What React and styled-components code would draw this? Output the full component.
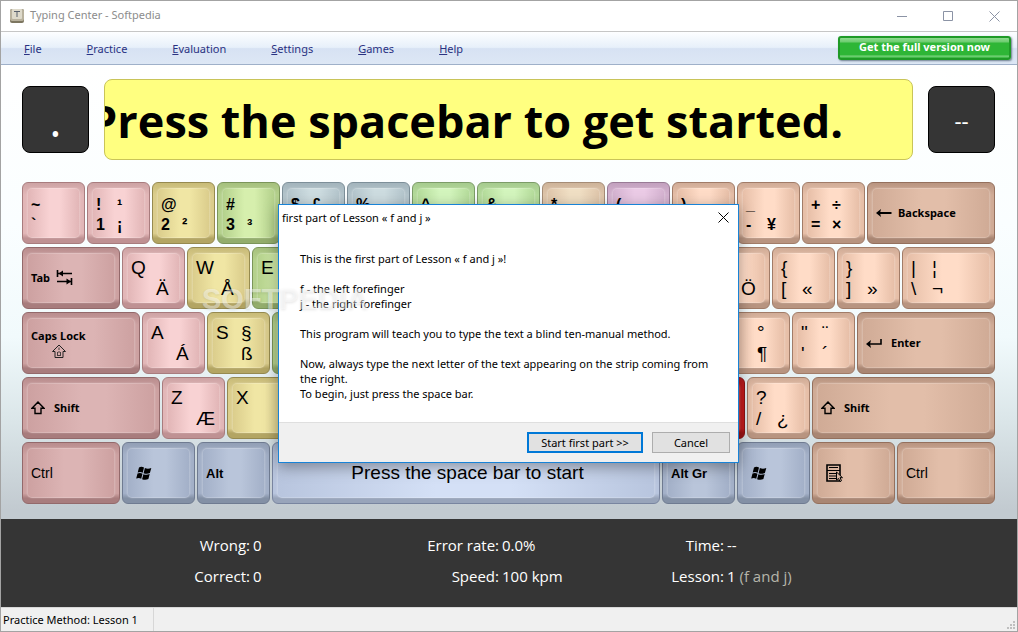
import styled, { createGlobalStyle } from "styled-components";

const GlobalStyle = createGlobalStyle`
*{
    box-sizing:border-box;
}
body{
    margin:0;
    font-family:"Noto Sans", "Open Sans", sans-serif;
    font-size:11px;
    color:#000;
}
button{
    font:inherit;
    color:inherit;
    padding:0;
}
`;

const tones = {
    pink: { face: "#f8d2d3", edge: "#e2b6b7", top: "#cda3a4", low: "#bf9193", line: "#a87c7e" },
    pinkMod: { face: "#dcb4b4", edge: "#cda1a1", top: "#b98d8e", low: "#a87c7d", line: "#93696b" },
    yellow: { face: "#f0e6a4", edge: "#dbcd8c", top: "#c8bb78", low: "#b3a563", line: "#968a50" },
    green: { face: "#d6efad", edge: "#b4d18c", top: "#a6c07e", low: "#93ad6c", line: "#7b955a" },
    mint: { face: "#d3f5bd", edge: "#b5dc9b", top: "#a6cb8f", low: "#90b67b", line: "#7c9c68" },
    steel: { face: "#cddce0", edge: "#b4c5cc", top: "#a3b4bc", low: "#92a4ac", line: "#7d8f99" },
    sand: { face: "#f0dfc4", edge: "#dfc6ab", top: "#cdb399", low: "#b59b82", line: "#a58c76" },
    violet: { face: "#ebcbe6", edge: "#d4b2d0", top: "#c2a1be", low: "#ab8aa7", line: "#997b96" },
    peach: { face: "#ffdcc7", edge: "#e7bfa8", top: "#d0ac97", low: "#b89480", line: "#a17c68" },
    peachMod: { face: "#e2bea9", edge: "#d0ab96", top: "#b99581", low: "#a98673", line: "#94705d" },
    blue: { face: "#b9c5da", edge: "#a3b0c8", top: "#929fb5", low: "#8390a5", line: "#6f7b91" },
    space: { face: "#d4e0f6", edge: "#b8c5de", top: "#a5b2cb", low: "#98a4ba", line: "#7985a0" },
    red: { face: "#e62020", edge: "#c41a1c", top: "#b51d1f", low: "#9c1416", line: "#8a1214" },
};

const Window = styled.div`
position:relative;
display:flex;
flex-direction:column;
min-height:100vh;
border:1px solid #a3a3a3;
background:#fff;
`;

const TitleBar = styled.header`
display:flex;
align-items:center;
height:31px;
padding-left:8px;
border-bottom:1px solid #c6c6c6;
color:#8c8c8c;
h1{
    flex:1;
    margin:0 0 0 5px;
    font-size:11px;
    font-weight:normal;
    line-height:28px;
    padding-bottom:2px;
}
`;

const CaptionBtn = styled.button`
display:grid;
place-items:center;
width:46px;
height:30px;
border:0;
background:none;
`;

const MenuBar = styled.nav`
display:flex;
align-items:center;
gap:1px;
height:33px;
padding:0 6px 0 1px;
border-bottom:1px solid #9fb0c9;
background:linear-gradient(#fdfeff 0, #e7f0fa 48%, #d7e2f3 52%, #dde7f5 100%);
`;

const MenuLink = styled.a`
padding:0 22px;
color:#2a3282;
text-decoration:none;
`;

const FullVersionBtn = styled.button`
width:173px;
height:24px;
margin-left:auto;
padding-bottom:2px;
border:2px solid #1f9a27;
border-radius:3px;
background:linear-gradient(#8fdb8f 0, #6dcc70 4px, #2eb636 5px, #2eb636 17px, #7fd482 18px, #2eb636 20px);
box-shadow:1px 1px 2px #6c7c8c;
color:#fff;
font-weight:bold;
line-height:16px;
`;

const Trainer = styled.main`
flex:1;
padding:14px 22px 15px 21px;
background:linear-gradient(#fff 0, #fafeff 35%, #f1fafc 60%, #dbe6e9 78%, #c2cad0 98%);
`;

const StripRow = styled.div`
display:flex;
align-items:center;
gap:15px;
`;

const LetterBox = styled.output`
flex:none;
display:flex;
align-items:center;
justify-content:center;
width:67px;
height:67px;
border:1px solid #000;
border-radius:8px;
background:#353535;
color:#fff;
font-size:${(p) => (p.$big ? "44px" : "22px")};
line-height:40px;
`;

const Strip = styled.div`
flex:1;
display:flex;
justify-content:flex-end;
min-width:0;
height:81px;
padding-right:69px;
border:1px solid #c9c459;
border-radius:8px;
overflow:hidden;
background:#ffff80;
font-family:"Open Sans", "Noto Sans", sans-serif;
font-size:45px;
font-weight:bold;
line-height:82px;
white-space:nowrap;
`;

const Keyboard = styled.div`
display:grid;
gap:3px;
margin-top:22px;
`;

const KeyRow = styled.div`
display:flex;
gap:2px;
`;

const KeyCap = styled.button`
flex:${(p) => `${p.$width} ${p.$width} ${p.$width}px`};
display:flex;
min-width:0;
height:62px;
padding:5px 4px;
border:1px solid ${(p) => p.$tone.line};
border-radius:6px;
background:linear-gradient(${(p) => `${p.$tone.top} 0, ${p.$tone.edge} 20%, ${p.$tone.edge} 84%, ${p.$tone.low} 92%`});
text-align:left;
`;

const Face = styled.span`
flex:1;
display:flex;
flex-direction:${(p) => (p.$stack ? "column" : "row")};
align-items:${(p) => (p.$stack ? "flex-start" : "center")};
justify-content:${(p) => (p.$center ? "center" : "flex-start")};
gap:${(p) => (p.$stack ? "0" : `${p.$gap || 6}px`)};
min-width:0;
padding-left:3px;
border:1px solid rgba(255,255,255,.18);
border-radius:5px;
background:linear-gradient(to right, ${(p) => `${p.$tone.edge}, ${p.$tone.face} 42%, ${p.$tone.face} 62%, ${p.$tone.edge}`});
box-shadow:0 0 2px rgba(255,255,255,.3);
svg{
    flex:none;
}
`;

const Legends = styled.span`
display:grid;
grid-template-columns:${(p) => (p.$letters ? "25px" : "21px")} auto;
grid-auto-rows:${(p) => (p.$bold ? "20px" : "21px")};
padding-top:${(p) => (p.$bold ? "4px" : "2px")};
font-family:"Liberation Sans", Arial, sans-serif;
font-size:${(p) => (p.$bold ? "16px" : "19px")};
font-weight:${(p) => (p.$bold ? "bold" : "normal")};
line-height:20px;
`;

const KeyLabel = styled.span`
font-weight:bold;
line-height:16px;
white-space:nowrap;
`;

const PlainLabel = styled.span`
font-family:"Liberation Sans", Arial, sans-serif;
font-size:${(p) => p.$size}px;
font-weight:${(p) => (p.$bold ? "bold" : "normal")};
white-space:nowrap;
`;

const IconSlot = styled.span`
display:flex;
padding-left:${(p) => p.$indent || 0}px;
`;

const Stats = styled.dl`
display:grid;
grid-template-columns:249fr 150fr 99fr 120fr 105fr 293fr;
grid-auto-rows:31px;
margin:0;
padding:11px 0 15px;
background:#353535;
color:#fff;
font-family:"Open Sans", "Noto Sans", sans-serif;
font-size:15px;
line-height:31px;
white-space:nowrap;
dt{
    text-align:right;
}
dd{
    margin:0;
    padding-left:3px;
}
small{
    color:#b5b5ab;
    font-size:15px;
}
`;

const StatusBar = styled.footer`
display:flex;
align-items:stretch;
justify-content:space-between;
height:24px;
border-top:1px solid #d7d7d7;
background:#f0f0f0;
line-height:23px;
span{
    width:153px;
    padding-left:2px;
    border-right:1px solid #d7d7d7;
    white-space:nowrap;
}
svg{
    align-self:flex-end;
    margin:0 2px 2px 0;
}
`;

const Dialog = styled.section`
position:absolute;
top:203px;
left:calc(50% - 231px);
width:461px;
display:flex;
flex-direction:column;
border:1px solid #1883d7;
background:#fff;
box-shadow:0 4px 14px rgba(0,0,0,.35);
`;

const DialogTitle = styled.div`
display:flex;
align-items:center;
justify-content:space-between;
height:24px;
padding-left:3px;
h2{
    margin:0;
    font-size:11px;
    font-weight:normal;
}
`;

const CloseBtn = styled.button`
display:grid;
place-items:center;
width:30px;
height:24px;
border:0;
background:none;
`;

const DialogBody = styled.div`
padding:22px 10px 21px 21px;
line-height:15px;
white-space:nowrap;
p{
    margin:0 0 15px;
}
p:last-child{
    margin:0;
}
`;

const DialogFooter = styled.div`
display:flex;
justify-content:flex-end;
gap:9px;
padding:9px 8px;
border-top:1px solid #dfdfdf;
background:#f0f0f0;
`;

const DialogBtn = styled.button`
width:${(p) => (p.$primary ? "116px" : "78px")};
height:21px;
border:${(p) => (p.$primary ? "2px solid #0078d7" : "1px solid #adadad")};
background:#e1e1e1;
line-height:15px;
`;

const Watermark = styled.span`
position:absolute;
top:278px;
left:201px;
color:rgba(255,255,255,.45);
font-family:"Liberation Sans", Arial, sans-serif;
font-size:29px;
font-weight:bold;
line-height:40px;
text-shadow:0 1px 3px rgba(0,0,0,.1);
pointer-events:none;
`;

const AppIcon = () => (
    <svg width="16" height="16" viewBox="0 0 16 16">
        <rect x="1" y="1" width="14" height="14" rx="2" fill="#7d7660" />
        <rect x="1" y="1" width="14" height="12" rx="2" fill="#b9b29e" />
        <rect x="3" y="1" width="10" height="10" rx="1" fill="#dedacb" />
        <path d="M5 3.500h6M8 3v6" stroke="#59616c" fill="none" />
    </svg>
);

const TabIcon = () => (
    <svg width="18" height="18" viewBox="0 0 18 18" fill="none" stroke="#000" strokeWidth="1.600">
        <path d="M1.500 1v7M2 4.500h14M15.500 9v7M1 12.500h14" />
        <path d="M7 1.500v6L2.500 4.500zM10.500 9.500v6l4.500-3z" fill="#000" stroke="none" />
    </svg>
);

const CapsIcon = () => (
    <svg width="16" height="15" viewBox="0 0 16 15" fill="none" stroke="#222">
        <path d="M8 1L1.500 7.500H4V13.500H12V7.500H14.500z" />
        <path d="M8 3.500V6M6.500 8v3M9.500 8v3M8 7v2M6 11.500h4" strokeWidth="0.800" />
    </svg>
);

const ShiftIcon = () => (
    <svg width="14" height="14" viewBox="0 0 14 14" fill="none" stroke="#000" strokeWidth="1.400">
        <path d="M7 1L1 7.300H4V12.500H10V7.300H13z" />
    </svg>
);

const BackIcon = () => (
    <svg width="16" height="10" viewBox="0 0 16 10">
        <path d="M3 5h12.500" stroke="#000" strokeWidth="2" />
        <path d="M0 5l5-4-1 4 1 4z" />
    </svg>
);

const EnterIcon = () => (
    <svg width="16" height="10" viewBox="0 0 16 10">
        <path d="M3 6h12V1" fill="none" stroke="#000" strokeWidth="1.600" />
        <path d="M0 6l5-4-1 4 1 4z" />
    </svg>
);

const WinIcon = () => (
    <svg width="16" height="15" viewBox="0 0 16 15">
        <path d="M3 1.500C5 .3 6.500.8 8 1.600L6.700 6.700C5 5.900 3.500 5.700 1.700 6.600zM8.900 2.100C11 3 13 3 15.300 2L13.900 7C12 8 9.800 8 7.600 7.200zM1.500 7.500C3.500 6.600 5 6.900 6.500 7.700L5.200 12.700C3.500 11.800 2 11.800.2 12.600zM7.400 8.200C9.500 9 11.500 9 13.700 8L12.400 13C10.500 14 8.200 14 6.100 13.200z" />
    </svg>
);

const ContextIcon = () => (
    <svg width="18" height="19" viewBox="0 0 18 19" fill="none" stroke="#000">
        <path d="M1 1h13v16H1z" strokeWidth="1.600" />
        <path d="M1 6.500h13M3 3.500h9M3 9.500h8M3 12h7M3 14.500h7" />
        <path d="M10.500 8v8l2-1.500 1.500 3 1.500-.8-1.500-3h2.500z" fill="#dcb9a4" />
    </svg>
);

const Cross = ({ color }) => (
    <svg width="11" height="11" viewBox="0 0 11 11">
        <path d="M.5.5l10 10M10.500.5l-10 10" stroke={color} fill="none" />
    </svg>
);

const Grip = () => (
    <svg width="8" height="8" viewBox="0 0 8 8" fill="#bfbfbf">
        <path d="M6 0h2v2H6zM3 3h2v2H3zM6 3h2v2H6zM0 6h2v2H0zM3 6h2v2H3zM6 6h2v2H6z" />
    </svg>
);

// legends are listed as upper left, upper right, lower left, lower right
const digitRow = [
    ["pink", "~", "", "`", ""],
    ["pink", "!", "¹", "1", "¡"],
    ["yellow", "@", "", "2", "²"],
    ["green", "#", "", "3", "³"],
    ["steel", "$", "£", "", ""],
    ["steel", "%", "", "", ""],
    ["mint", "^", "", "", ""],
    ["mint", "&", "", "", ""],
    ["sand", "*", "", "", ""],
    ["violet", "(", "", "", ""],
    ["peach", ")", "", "", ""],
    ["peach", "_", "", "-", "¥"],
    ["peach", "+", "÷", "=", "×"],
];

const topRow = [
    ["pink", "Q", "", "", "Ä"],
    ["yellow", "W", "", "", "Å"],
    ["green", "E", "", "", ""],
    ["steel"],
    ["steel"],
    ["mint"],
    ["mint"],
    ["sand"],
    ["violet"],
    ["peach", "", "", "", "Ö"],
];

const bracketKeys = [
    ["peach", "{", "", "[", "«"],
    ["peach", "}", "", "]", "»"],
];

const homeRow = [
    ["pink", "A", "", "", "Á"],
    ["yellow", "S", "§", "", "ß"],
    ["green"],
    ["steel"],
    ["steel"],
    ["mint"],
    ["mint"],
    ["sand"],
    ["violet"],
];

const quoteKeys = [
    ["peach", "", "°", "", "¶"],
    ["peach", "\"", "¨", "'", "´"],
];

const bottomRow = [
    ["pink", "Z", "", "", "Æ"],
    ["yellow", "X", "", "", ""],
    ["green"],
    ["steel"],
    ["steel"],
    ["mint"],
    ["mint"],
    ["sand"],
    ["red"],
];

function Key({ tone, width = 63, children, ...face }) {
    return (
        <KeyCap type="button" $tone={tones[tone]} $width={width}>
            <Face $tone={tones[tone]} {...face}>{children}</Face>
        </KeyCap>
    );
}

function LegendKey({ legend, width, bold, letters }) {
    const [tone, ...marks] = legend;
    return (
        <Key tone={tone} width={width}>
            <Legends $bold={bold} $letters={letters}>
                {marks.map((mark, i) => <span key={i}>{mark}</span>)}
            </Legends>
        </Key>
    );
}

function LegendKeys({ keys, ...rest }) {
    return keys.map((legend, i) => <LegendKey key={i} legend={legend} {...rest} />);
}

function LessonDialog() {
    return (
        <Dialog role="dialog" aria-labelledby="lesson-title">
            <DialogTitle>
                <h2 id="lesson-title">first part of Lesson « f and j »</h2>
                <CloseBtn type="button" aria-label="Close dialog"><Cross color="#000" /></CloseBtn>
            </DialogTitle>
            <DialogBody>
                <p>This is the first part of Lesson « f and j »!</p>
                <p>f - the left forefinger<br />j - the right forefinger</p>
                <p>This program will teach you to type the text a blind ten-manual method.</p>
                <p>
                    Now, always type the next letter of the text appearing on the strip coming from<br />
                    the right.<br />
                    To begin, just press the space bar.
                </p>
            </DialogBody>
            <DialogFooter>
                <DialogBtn type="button" $primary>Start first part &gt;&gt;</DialogBtn>
                <DialogBtn type="button">Cancel</DialogBtn>
            </DialogFooter>
        </Dialog>
    );
}

const menus = ["File", "Practice", "Evaluation", "Settings", "Games", "Help"];

function App() {
    return (
        <Window>
            <GlobalStyle />
            <TitleBar>
                <AppIcon />
                <h1>Typing Center - Softpedia</h1>
                <CaptionBtn type="button" aria-label="Minimize">
                    <svg width="10" height="1"><path d="M0 .5h10" stroke="#8b93a5" /></svg>
                </CaptionBtn>
                <CaptionBtn type="button" aria-label="Maximize">
                    <svg width="10" height="10"><path d="M.5.5h9v9h-9z" stroke="#8b93a5" fill="none" /></svg>
                </CaptionBtn>
                <CaptionBtn type="button" aria-label="Close"><Cross color="#8b93a5" /></CaptionBtn>
            </TitleBar>
            <MenuBar>
                {menus.map((name) => (
                    <MenuLink key={name} href="#"><u>{name[0]}</u>{name.slice(1)}</MenuLink>
                ))}
                <FullVersionBtn type="button">Get the full version now</FullVersionBtn>
            </MenuBar>
            <Trainer>
                <StripRow>
                    <LetterBox $big>.</LetterBox>
                    <Strip>Press the spacebar to get started.</Strip>
                    <LetterBox>--</LetterBox>
                </StripRow>
                <Keyboard>
                    <KeyRow>
                        <LegendKeys keys={digitRow} bold />
                        <Key tone="peachMod" width={128}><BackIcon /><KeyLabel>Backspace</KeyLabel></Key>
                    </KeyRow>
                    <KeyRow>
                        <Key tone="pinkMod" width={98}><KeyLabel>Tab</KeyLabel><TabIcon /></Key>
                        <LegendKeys keys={topRow} letters />
                        <LegendKeys keys={bracketKeys} />
                        <LegendKey legend={["peach", "|", "¦", "\\", "¬"]} width={93} />
                    </KeyRow>
                    <KeyRow>
                        <Key tone="pinkMod" width={118} $stack $center>
                            <KeyLabel>Caps Lock</KeyLabel>
                            <IconSlot $indent={20}><CapsIcon /></IconSlot>
                        </Key>
                        <LegendKeys keys={homeRow} letters />
                        <LegendKeys keys={quoteKeys} />
                        <Key tone="peachMod" width={138} $gap={9}><EnterIcon /><KeyLabel>Enter</KeyLabel></Key>
                    </KeyRow>
                    <KeyRow>
                        <Key tone="pinkMod" width={138} $gap={9}><ShiftIcon /><KeyLabel>Shift</KeyLabel></Key>
                        <LegendKeys keys={bottomRow} letters />
                        <LegendKey legend={["peach", "?", "", "/", "¿"]} />
                        <Key tone="peachMod" width={183} $gap={9}><ShiftIcon /><KeyLabel>Shift</KeyLabel></Key>
                    </KeyRow>
                    <KeyRow>
                        <Key tone="pinkMod" width={98}><PlainLabel $size={14}>Ctrl</PlainLabel></Key>
                        <Key tone="blue" width={73}><IconSlot $indent={5}><WinIcon /></IconSlot></Key>
                        <Key tone="blue" width={73}><PlainLabel $size={13} $bold>Alt</PlainLabel></Key>
                        <Key tone="space" width={388} $center><PlainLabel $size={19}>Press the space bar to start</PlainLabel></Key>
                        <Key tone="blue" width={73}><PlainLabel $size={13} $bold>Alt Gr</PlainLabel></Key>
                        <Key tone="blue" width={73}><IconSlot $indent={5}><WinIcon /></IconSlot></Key>
                        <Key tone="peachMod" width={83}><IconSlot $indent={5}><ContextIcon /></IconSlot></Key>
                        <Key tone="peachMod" width={98}><PlainLabel $size={14}>Ctrl</PlainLabel></Key>
                    </KeyRow>
                </Keyboard>
            </Trainer>
            <Stats>
                <dt>Wrong:</dt><dd>0</dd>
                <dt>Error rate:</dt><dd>0.0%</dd>
                <dt>Time:</dt><dd>--</dd>
                <dt>Correct:</dt><dd>0</dd>
                <dt>Speed:</dt><dd>100 kpm</dd>
                <dt>Lesson:</dt><dd>1 <small>(f and j)</small></dd>
            </Stats>
            <StatusBar>
                <span>Practice Method: Lesson 1</span>
                <Grip />
            </StatusBar>
            <LessonDialog />
            <Watermark aria-hidden="true">SOFTPEDIA</Watermark>
        </Window>
    );
}

export default App;
